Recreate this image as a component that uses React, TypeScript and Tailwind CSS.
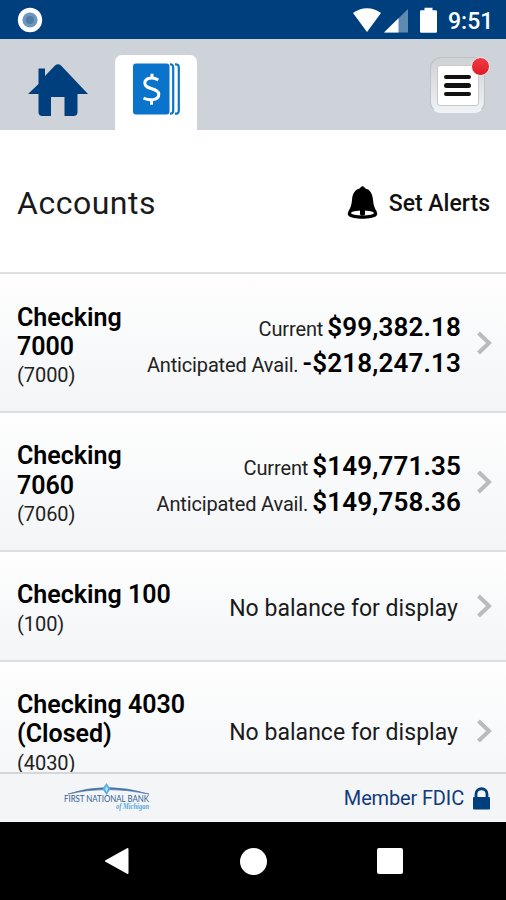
interface Account {
  name: string[];
  number: string;
  current?: string;
  available?: string;
}

const accounts: Account[] = [
  { name: ["Checking", "7000"], number: "(7000)", current: "$99,382.18", available: "-$218,247.13" },
  { name: ["Checking", "7060"], number: "(7060)", current: "$149,771.35", available: "$149,758.36" },
  { name: ["Checking 100"], number: "(100)" },
  { name: ["Checking 4030", "(Closed)"], number: "(4030)" },
];

function StatusBar() {
  return (
    <div className="flex h-[39px] shrink-0 items-center bg-[#003f7d] pl-[17px] pr-[14px]">
      <svg className="h-[26px] w-[26px]" viewBox="0 0 26 26">
        <circle cx="13" cy="13" r="12.2" fill="#fff" />
        <circle cx="13" cy="13" r="7.6" fill="#6d96bb" />
        <circle cx="13" cy="13" r="4" fill="#4d7ca8" />
      </svg>
      <svg className="ml-auto h-[26px] w-[30px]" viewBox="0 0 30 26">
        <path d="M1 6C9 -0.4 21 -0.4 29 6L15 25Z" fill="#fff" />
      </svg>
      <svg className="ml-[2px] h-[26px] w-[24px]" viewBox="0 0 24 26">
        <path d="M0 25.500L24 2V25.500Z" fill="#5f8bb2" />
        <path d="M0 25.500L14.500 11.300V25.500Z" fill="#fff" />
      </svg>
      <svg className="ml-[12px] h-[26px] w-[17px]" viewBox="0 0 17 26">
        <path d="M0 4.500Q0 3.300 1.200 3.300H4.500V0.800H12.500V3.300H15.800Q17 3.300 17 4.500V24.500Q17 25.700 15.800 25.700H1.200Q0 25.700 0 24.500Z" fill="#fff" />
      </svg>
      <span className="ml-[11px] mt-[4px] w-[44px] whitespace-nowrap text-[23px] font-medium leading-[26px] text-white">9:51</span>
    </div>
  );
}

function HomeIcon() {
  return (
    <svg className="h-[54px] w-[60px]" viewBox="0 0 60 54" fill="#003f7d">
      <path d="M0 31L10.500 21V6Q10.500 5.500 11 5.500H17V13L27 2.500Q30 0 33 2.500L60 31H49.500V49Q49.500 53 45.500 53H36.500V34H23V53H14.500Q10.500 53 10.500 49V31Z" />
    </svg>
  );
}

function TabBar() {
  return (
    <div className="flex h-[91px] shrink-0 items-end bg-[#ced3d9] pl-[28px] pr-[21px]">
      <div className="pb-[13px]">
        <HomeIcon />
      </div>
      <div className="ml-[27px] flex h-[75px] w-[82px] justify-center rounded-t-[7px] bg-white pt-[8px]">
        <svg className="h-[52px] w-[48px]" viewBox="0 0 48 52">
          <rect x="1" y="0.500" width="36.500" height="51" rx="3" fill="#0a74cc" />
          <path d="M38 1.300Q41.200 1 41.200 4.500V47.500Q41.200 51 38 50.700M43 1.300Q46.800 1 46.800 4.500V47.500Q46.800 51 43 50.700" fill="none" stroke="#0a74cc" strokeWidth="2.200" />
          <path d="M26.300 17C21 13.800 12.800 14.500 12.800 20.300C12.800 26.800 26.800 24.800 26.800 31.200C26.800 37.500 17.500 38 11.500 35.200M20 10.800V15.500M19.500 36.500V41.800" fill="none" stroke="#fff" strokeWidth="3" />
        </svg>
      </div>
      <div className="relative ml-auto mb-[17px] flex h-[56px] w-[55px] items-center justify-center rounded-[11px] border border-[#bec3c8] border-b-[#f2f4f6] bg-linear-to-b from-[#cfd2d4] to-[#f0f3f5]">
        <div className="flex h-[41px] w-[42px] flex-col items-center justify-center gap-[4px] rounded-[3px] border border-[#c5c8ca] bg-white pt-[1px]">
          <span className="h-[4.6px] w-[27px] rounded-full bg-[#111]" />
          <span className="h-[4.6px] w-[27px] rounded-full bg-[#111]" />
          <span className="h-[4.6px] w-[27px] rounded-full bg-[#111]" />
        </div>
        <span className="absolute -right-[6px] -top-[1px] h-[19px] w-[19px] rounded-full border-[1.5px] border-[#f8e4e6] bg-linear-to-b from-[#f03a44] to-[#df1825]" />
      </div>
    </div>
  );
}

function BellIcon() {
  return (
    <svg className="h-[34px] w-[31px]" viewBox="0 0 31 34">
      <path d="M15.500 0.300Q17.300 0.300 18 2.200C23.500 3.500 25.500 8 26 14C26.500 19 27.500 22 29.500 25Q31 28 29.500 29.800C26 33.800 5 33.800 1.500 29.800Q0 28 1.500 25C3.500 22 4.500 19 5 14C5.500 8 7.500 3.500 13 2.200Q13.700 0.300 15.500 0.300Z" fill="#000" />
      <ellipse cx="15.500" cy="27" rx="11.500" ry="2.600" fill="#fff" />
      <path d="M13 23H18V28.500Q15.500 31 13 28.500Z" fill="#000" />
    </svg>
  );
}

function Balance({ label, amount }: { label: string; amount?: string }) {
  return (
    <div className="flex h-[36px] items-baseline gap-[4px]">
      <span className="text-[20px] tracking-[-0.15px] text-[#222]">{label}</span>
      <span className="text-[26px] font-semibold tracking-[0.15px] text-black">{amount}</span>
    </div>
  );
}

function AccountRow({ account }: { account: Account }) {
  return (
    <div className="flex shrink-0 border-b-2 border-[#dcdfe2] bg-linear-to-b from-[#fefefe] to-[#f3f5f7] pl-[17px] pr-[14px]">
      <div className="whitespace-nowrap pb-[21px] pt-[28px] leading-[29.33px]">
        <div className="text-[25px] font-semibold text-black">
          {account.name.map((line) => (
            <div key={line}>{line}</div>
          ))}
        </div>
        <div className="text-[20px] tracking-[-0.05px] text-[#222]">{account.number}</div>
      </div>
      <div className="ml-auto flex items-center">
        {account.current ? (
          <div className="grid justify-items-end whitespace-nowrap pt-[4px] leading-[36px]">
            <Balance label="Current" amount={account.current} />
            <Balance label="Anticipated Avail." amount={account.available} />
          </div>
        ) : (
          <span className="mr-[3px] whitespace-nowrap pt-[5px] text-[23px] tracking-[0.03px] text-[#1a1a1a]">No balance for display</span>
        )}
        <svg className="ml-[16px] h-[24px] w-[15px]" viewBox="0 0 15 24">
          <path d="M1.500 2L12 12L1.500 22" fill="none" stroke="#bbb" strokeWidth="4" />
        </svg>
      </div>
    </div>
  );
}

function BankLogo() {
  return (
    <svg className="h-[32px] w-[90px] overflow-visible" viewBox="0 0 90 32">
      <path d="M5 12Q43 -1 86 12Q43 3 5 12Z" fill="#4472a4" stroke="#4472a4" strokeWidth="0.600" />
      <path d="M43.500 1L47.500 7L43.500 13L39.500 7Z" fill="#55aee3" />
      <path d="M43.500 4L45 7L43.500 10L42 7Z" fill="#b9e2f5" />
      <text x="1" y="20" textLength="85" lengthAdjust="spacingAndGlyphs" fontFamily="Lato, sans-serif" fontSize="9" fill="#315d94">FIRST NATIONAL BANK</text>
      <text x="53" y="27" textLength="33" lengthAdjust="spacingAndGlyphs" fontFamily="Liberation Serif, serif" fontSize="7.5" fontStyle="italic" fontWeight="700" fill="#55a8dc">of Michigan</text>
    </svg>
  );
}

export default function App() {
  return (
    <div className="flex h-[900px] w-[506px] flex-col overflow-hidden bg-white font-['Roboto',sans-serif]">
      <StatusBar />
      <TabBar />

      {/* Page heading */}
      <div className="flex h-[144px] shrink-0 items-center border-b-2 border-[#dcdfe0] pl-[17px] pr-[16px] pt-[4px]">
        <h1 className="text-[32px] tracking-[0.5px] text-[#1a1a1a]">Accounts</h1>
        <div className="ml-auto flex items-center gap-[11px]">
          <BellIcon />
          <span className="whitespace-nowrap pt-[3px] text-[23px] font-medium text-[#111]">Set Alerts</span>
        </div>
      </div>

      {/* Account list, last row runs under the footer */}
      <div className="flex min-h-0 flex-1 flex-col overflow-hidden pt-[0.5px]">
        {accounts.map((account) => (
          <AccountRow key={account.number} account={account} />
        ))}
      </div>

      <div className="flex h-[50px] shrink-0 items-center border-t-2 border-[#d3d7dc] bg-[#f3f5f7] pl-[63px] pr-[16px]">
        <BankLogo />
        <span className="ml-auto whitespace-nowrap text-[20px] tracking-[-0.15px] text-[#123a7c]">Member FDIC</span>
        <svg className="ml-[9px] h-[23px] w-[17px]" viewBox="0 0 17 23">
          <path d="M3 11V7C3 0 14 0 14 7V11" fill="none" stroke="#003f7d" strokeWidth="2.800" />
          <rect y="10" width="17" height="12.500" rx="1" fill="#003f7d" />
        </svg>
      </div>

      {/* System navigation */}
      <div className="flex h-[78px] shrink-0 items-center justify-between bg-black pl-[103px] pr-[103px]">
        <svg className="h-[28px] w-[26px]" viewBox="0 0 26 28">
          <path d="M3 14L24.500 2V26Z" fill="#fff" stroke="#fff" strokeWidth="2" strokeLinejoin="round" />
        </svg>
        <span className="h-[27px] w-[27px] rounded-full bg-white" />
        <span className="h-[26px] w-[26px] rounded-[2px] bg-white" />
      </div>
    </div>
  );
}
